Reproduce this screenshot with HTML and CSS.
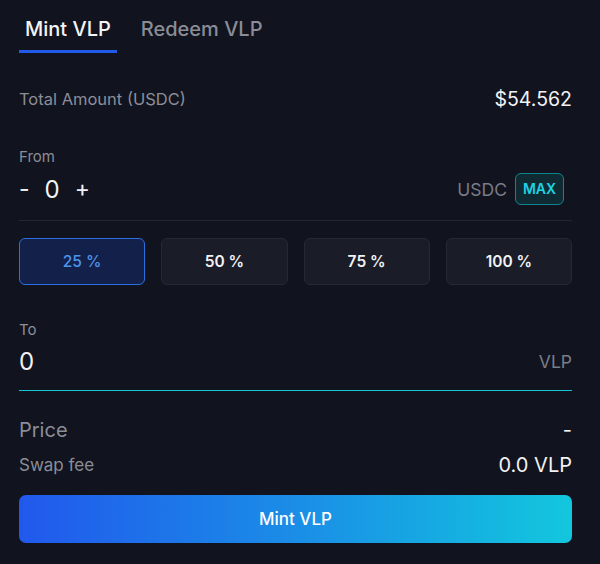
FILE: index.html
```html
<!DOCTYPE html>
<html lang="en">
<head>
<meta charset="utf-8">
<title>Mint VLP</title>
<link rel="stylesheet" href="styles.css">
</head>
<body>
<div class="panel">
  <div class="tabs">
    <div class="tab active">Mint VLP</div>
    <div class="tab">Redeem VLP</div>
  </div>

  <div class="row total">
    <span class="label">Total Amount (USDC)</span>
    <span class="value">$54.562</span>
  </div>

  <div class="field-label from-label">From</div>
  <div class="row amount">
    <div class="stepper">
      <span class="step minus">-</span>
      <span class="num">0</span>
      <span class="step plus">+</span>
    </div>
    <div class="token">
      <span class="unit">USDC</span>
      <span class="max">MAX</span>
    </div>
  </div>
  <div class="divider"></div>

  <div class="pcts">
    <button class="pct active">25 %</button>
    <button class="pct">50 %</button>
    <button class="pct">75 %</button>
    <button class="pct">100 %</button>
  </div>

  <div class="field-label to-label">To</div>
  <div class="row to-row">
    <span class="num">0</span>
    <span class="unit">VLP</span>
  </div>

  <div class="row price">
    <span class="label">Price</span>
    <span class="value">-</span>
  </div>
  <div class="row fee">
    <span class="label">Swap fee</span>
    <span class="value">0.0 VLP</span>
  </div>

  <button class="mint">Mint VLP</button>
</div>
</body>
</html>
```

FILE: styles.css
```css
html, body {
  margin: 0;
  padding: 0;
  background: #11131f;
}
body {
  font-family: "Inter", "Noto Sans", sans-serif;
  color: #f2f2f4;
  width: 600px;
  height: 564px;
  overflow: hidden;
}
.panel {
  padding: 8px 28px 0 19px;
}
.tabs {
  display: flex;
  gap: 16px;
}
.tab {
  padding: 0 8px;
  height: 42px;
  line-height: 42px;
  font-size: 20px;
  font-weight: 500;
  color: #8a8d96;
  border-bottom: 3px solid transparent;
}
.tab.active {
  color: #f4f4f6;
  border-bottom-color: #1f5ae8;
  padding: 0 6px;
}
.row {
  display: flex;
  justify-content: space-between;
  align-items: center;
}
.label {
  color: #8b8e98;
}
.total {
  margin-top: 34px;
  line-height: 24px;
}
.total .label {
  font-size: 16.5px;
}
.total .value {
  font-size: 19.5px;
  font-weight: 400;
}
.field-label {
  color: #8b8e98;
  font-size: 15px;
  line-height: 20px;
}
.from-label {
  margin-top: 36px;
}
.amount {
  margin-top: 6px;
  height: 32px;
}
.stepper {
  display: flex;
  align-items: center;
  gap: 15px;
  font-size: 24px;
}
.step {
  font-size: 23px;
}
.num {
  font-size: 24px;
}
.token {
  display: flex;
  align-items: center;
  gap: 8px;
  margin-right: 8px;
}
.unit {
  color: #7a7d87;
  font-size: 17.5px;
}
.max {
  width: 47px;
  height: 30px;
  line-height: 30px;
  text-align: center;
  font-size: 14px;
  font-weight: 600;
  color: #1fd3e6;
  background: #0f2a33;
  border: 1px solid #11858f;
  border-radius: 6px;
}
.divider {
  margin-top: 15px;
  border-top: 1px solid #242733;
}
.pcts {
  margin-top: 17px;
  display: grid;
  grid-template-columns: repeat(4, 1fr);
  gap: 16px;
}
.pct {
  height: 47px;
  background: #1a1c27;
  border: 1px solid #262935;
  border-radius: 6px;
  color: #f2f2f4;
  font-family: inherit;
  font-size: 15.5px;
  font-weight: 600;
}
.pct.active {
  background: #13204a;
  border-color: #2c6fe0;
  color: #4c94ea;
  font-weight: 500;
}
.to-label {
  margin-top: 35px;
}
.to-row {
  margin-top: 6px;
  line-height: 32px;
  padding-bottom: 12px;
  border-bottom: 1px solid #13c6d6;
}
.price {
  margin-top: 25px;
  line-height: 28px;
}
.price .label {
  font-size: 20px;
}
.price .value {
  font-size: 20px;
}
.fee {
  margin-top: 9px;
  line-height: 24px;
}
.fee .label {
  font-size: 17px;
}
.fee .value {
  font-size: 20px;
  font-weight: 400;
}
.mint {
  display: block;
  width: 100%;
  margin-top: 18px;
  height: 48px;
  border: none;
  border-radius: 7px;
  background: linear-gradient(90deg, #2158ec 0%, #1a93e6 55%, #12c7dd 100%);
  color: #ffffff;
  font-family: inherit;
  font-size: 17px;
  font-weight: 500;
}
```
